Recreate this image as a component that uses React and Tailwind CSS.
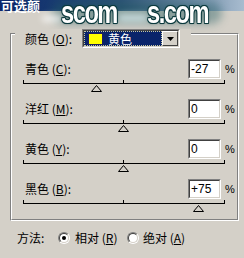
import React from 'react';

const rows = [
  { label: '青色', key: 'C', value: '-27', v: -27 },
  { label: '洋红', key: 'M', value: '0', v: 0 },
  { label: '黄色', key: 'Y', value: '0', v: 0 },
  { label: '黑色', key: 'B', value: '+75', v: 75 },
];

function Field({ value }) {
  return (
    <div className="w-[33px] h-[20px] border border-t-[#808080] border-l-[#808080] border-b-white border-r-white">
      <div className="w-full h-full border border-t-[#404040] border-l-[#404040] border-b-[#d4d0c8] border-r-[#d4d0c8] bg-white flex items-center pl-[1px] text-[12px] leading-none font-['Liberation_Sans',sans-serif] text-black">
        {value}
      </div>
    </div>
  );
}

function Slider({ v }) {
  const c = ((v + 100) / 200) * 201;
  return (
    <div className="relative ml-[11px] w-[202px] h-[20px]">
      <div className="absolute left-0 top-[4px] w-[202px] h-[1px] bg-black" />
      <div className="absolute left-0 top-[1px] w-[1px] h-[4px] bg-black" />
      <div className="absolute left-[100px] top-[1px] w-[1px] h-[4px] bg-black" />
      <div className="absolute left-[201px] top-[1px] w-[1px] h-[4px] bg-black" />
      <svg
        className="absolute top-[6px]"
        style={{ left: `${Math.round(c - 5.5)}px` }}
        width="11"
        height="7"
        viewBox="0 0 11 7"
      >
        <polygon points="5.5,0.5 10.5,6.5 0.5,6.5" fill="#d4d0c8" stroke="#000" strokeWidth="1" />
      </svg>
    </div>
  );
}

function Radio({ checked }) {
  return (
    <div className="w-[12px] h-[12px] rounded-full border border-t-[#808080] border-l-[#808080] border-b-white border-r-white">
      <div className="w-full h-full rounded-full border border-t-[#404040] border-l-[#404040] border-b-[#d4d0c8] border-r-[#d4d0c8] bg-white flex items-center justify-center">
        {checked && <div className="w-[4px] h-[4px] rounded-full bg-black" />}
      </div>
    </div>
  );
}

export default function App() {
  return (
    <div className="relative w-[244px] h-[258px] overflow-hidden bg-[#d4d0c8] text-black text-[12px] leading-[16px] font-['Noto_Sans_CJK_SC','Noto_Sans',sans-serif]">
      {/* title bar */}
      <div className="h-[11px] bg-gradient-to-r from-[#0a246a] via-[#2f5478] to-[#a8bccf] flex items-start">
        <span className="pl-[1px] text-[13px] leading-[11px] font-bold text-white whitespace-nowrap">可选颜</span>
      </div>

      {/* watermark */}
      <div className="pointer-events-none absolute left-0 top-0 w-[244px] h-[30px]">
        <div className="absolute left-[52px] top-[2px] w-[170px] h-[22px] rounded-full bg-[#1d5a5e]/40 blur-[4px]" />
        <div className="absolute left-[42px] top-[15px] w-[20px] h-[7px] rounded-full bg-white/70 blur-[3px]" />
        <div className="absolute left-[118px] top-[14px] w-[30px] h-[8px] rounded-full bg-[#cfe3e6]/80 blur-[3px]" />
        <span className="absolute left-[61px] top-0 origin-left scale-x-[0.74] text-[32px] leading-[24px] tracking-[-2px] font-bold text-white font-['Liberation_Sans',sans-serif] [text-shadow:1px_0_0_#0c3a3e,-1px_0_0_#0c3a3e,0_1px_0_#0c3a3e,0_-1px_0_#0c3a3e,1px_1px_0_#0c3a3e,-1px_-1px_0_#0c3a3e,1px_-1px_0_#0c3a3e,-1px_1px_0_#0c3a3e,0_0_3px_#0c3a3e]">
          scom
        </span>
        <span className="absolute left-[147px] top-0 origin-left scale-x-[0.74] text-[32px] leading-[24px] tracking-[-2px] font-bold text-white font-['Liberation_Sans',sans-serif] [text-shadow:1px_0_0_#0c3a3e,-1px_0_0_#0c3a3e,0_1px_0_#0c3a3e,0_-1px_0_#0c3a3e,1px_1px_0_#0c3a3e,-1px_-1px_0_#0c3a3e,1px_-1px_0_#0c3a3e,-1px_1px_0_#0c3a3e,0_0_3px_#0c3a3e]">
          s.com
        </span>
      </div>

      {/* group box */}
      <div className="relative mt-[22px] ml-[10px] w-[229px] border border-t-[#808080] border-l-[#808080] border-b-white border-r-white">
        <div className="border border-t-white border-l-white border-b-[#808080] border-r-[#808080] pt-[24px]">
          {rows.map((r) => (
            <div key={r.key}>
              <div className="flex items-center h-[20px] pl-[13px]">
                <span className="whitespace-nowrap">
                  {r.label} (<span className="underline">{r.key}</span>):
                </span>
                <div className="ml-auto">
                  <Field value={r.value} />
                </div>
                <span className="w-[16px] pl-[4px] text-[11px] font-['Liberation_Sans',sans-serif]">%</span>
              </div>
              <Slider v={r.v} />
            </div>
          ))}
        </div>

        {/* legend */}
        <div className="absolute left-[4px] top-[-5px] w-[176px] h-[19px] bg-[#d4d0c8] flex items-center pl-[10px]">
          <span className="w-[57px] whitespace-nowrap">
            颜色 (<span className="underline">O</span>):
          </span>
          <div className="w-[98px] h-[19px] border border-t-[#808080] border-l-[#808080] border-b-white border-r-white">
            <div className="w-full h-full border border-t-[#404040] border-l-[#404040] border-b-[#d4d0c8] border-r-[#d4d0c8] bg-white flex">
              <div className="flex-1 bg-[#0a246a] border border-dotted border-[#c8c8a0] flex items-center">
                <div className="ml-[3px] w-[15px] h-[12px] bg-[#ffff00] border border-[#202060]" />
                <span className="ml-[5px] text-white leading-[14px]">黄色</span>
              </div>
              <div className="w-[16px] h-full bg-[#d4d0c8] border border-t-white border-l-white border-b-[#404040] border-r-[#404040] flex items-center justify-center">
                <svg width="7" height="4" viewBox="0 0 7 4">
                  <polygon points="0,0 7,0 3.5,4" fill="#000" />
                </svg>
              </div>
            </div>
          </div>
        </div>
      </div>

      {/* method row */}
      <div className="mt-[9px] h-[16px] flex items-center pl-[17px]">
        <span className="w-[41px] whitespace-nowrap">方法:</span>
        <Radio checked />
        <span className="ml-[5px] w-[52px] whitespace-nowrap">
          相对 (<span className="underline">R</span>)
        </span>
        <Radio />
        <span className="ml-[4px] whitespace-nowrap">
          绝对 (<span className="underline">A</span>)
        </span>
      </div>
    </div>
  );
}
